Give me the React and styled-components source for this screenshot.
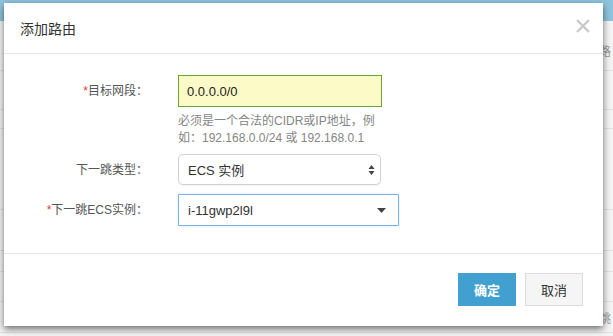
import React from "react";
import styled, { createGlobalStyle } from "styled-components";

const Global = createGlobalStyle`
  html, body { margin: 0; padding: 0; }
  body {
    font-family: "Liberation Sans", "Noto Sans CJK SC", sans-serif;
    background: #f4f4f4;
  }
`;

const Page = styled.div`
  position: relative;
  width: 613px;
  height: 336px;
  overflow: hidden;
  background: #f4f4f4;
`;

const TopBar = styled.div`
  height: 21px;
  background: #8ec4dd;
  display: flex;
  align-items: center;
  gap: 30px;
  padding-left: 210px;
  font-size: 12px;
  color: #d6ebf5;
`;

const Badge = styled.span`
  width: 22px;
  height: 10px;
  background: #f1c079;
`;

const Table = styled.div`
  display: flex;
  flex-direction: column;
  padding-top: 9px;
`;

const TableRow = styled.div`
  height: ${p => p.$h}px;
  border-bottom: 1px solid #e2e2e2;
  display: flex;
  align-items: center;
  justify-content: flex-end;
  padding-right: 2px;
  font-size: 12px;
  color: #9a9a9a;
`;

const Modal = styled.div`
  position: absolute;
  left: 4px;
  top: 3px;
  width: 599px;
  height: 323px;
  background: #fff;
  box-shadow: 0 3px 7px rgba(0, 0, 0, 0.55);
  display: flex;
  flex-direction: column;
`;

const Header = styled.div`
  height: 50px;
  border-bottom: 1px solid #e5e5e5;
  display: flex;
  align-items: center;
  justify-content: space-between;
  padding: 0 13px 0 16px;
`;

const Title = styled.h3`
  margin: 0;
  font-size: 14px;
  font-weight: normal;
  color: #333;
`;

const Close = styled.button`
  border: none;
  background: none;
  padding: 0;
  width: 14px;
  height: 14px;
  margin-top: -4px;
  cursor: pointer;
`;

const Body = styled.div`
  height: 200px;
  border-bottom: 1px solid #e5e5e5;
  padding-top: 21px;
  box-sizing: border-box;
  display: flex;
  flex-direction: column;
`;

const Row = styled.div`
  display: grid;
  grid-template-columns: 144px 1fr;
  column-gap: 30px;
  margin-bottom: ${p => p.$mb || 0}px;
`;

const Label = styled.label`
  text-align: right;
  font-size: 12px;
  color: #555;
  height: ${p => p.$h || 32}px;
  line-height: ${p => (p.$h || 32) + 1}px;
`;

const Star = styled.span`
  color: #e4393c;
`;

const Field = styled.div`
  display: flex;
  flex-direction: column;
`;

const Input = styled.input`
  width: 204px;
  height: 32px;
  box-sizing: border-box;
  border: 1px solid #6ba430;
  background: #fcfac6;
  padding: 0 8px;
  font-family: inherit;
  font-size: 13px;
  color: #222;
  outline: none;
`;

const Help = styled.div`
  width: 204px;
  margin-top: 6px;
  font-size: 12px;
  line-height: 17px;
  color: #858585;
`;

const Select = styled.div`
  width: ${p => p.$w}px;
  height: ${p => p.$h}px;
  box-sizing: border-box;
  border: 1px solid ${p => (p.$focus ? "#7ab3e8" : "#d2d2d2")};
  border-radius: ${p => (p.$focus ? 1 : 5)}px;
  box-shadow: ${p => (p.$focus ? "0 0 2px rgba(102,175,233,.4)" : "0 1px 1px rgba(0,0,0,.05)")};
  display: flex;
  align-items: center;
  justify-content: space-between;
  padding: 0 ${p => (p.$focus ? 12 : 5)}px 0 9px;
  font-size: 13px;
  color: #333;
  background: #fff;
`;

const Footer = styled.div`
  flex: 1;
  display: flex;
  justify-content: flex-end;
  align-items: flex-start;
  gap: 9px;
  padding: 19px 20px 0 0;
`;

const Button = styled.button`
  width: 58px;
  height: 33px;
  font-family: inherit;
  font-size: 13px;
  border: 1px solid ${p => (p.$primary ? "#42a0d0" : "#dcdcdc")};
  background: ${p => (p.$primary ? "#42a0d0" : "#f5f5f5")};
  color: ${p => (p.$primary ? "#fff" : "#333")};
  font-weight: ${p => (p.$primary ? "bold" : "normal")};
  cursor: pointer;
`;

const bgRows = [
  { h: 40, t: "路" }, { h: 38 }, { h: 18 }, { h: 80 }, { h: 40 }, { h: 20 }, { h: 29 }, { h: 30, t: "跳" },
];

export default function App() {
  return (
    <Page>
      <Global />
      <TopBar>
        <span>搜索</span>
        <span>帮助</span>
        <Badge />
        <span>Accountinfo</span>
        <span>退出</span>
      </TopBar>
      <Table>
        {bgRows.map((r, i) => (
          <TableRow key={i} $h={r.h}>{r.t}</TableRow>
        ))}
      </Table>

      <Modal>
        <Header>
          <Title>添加路由</Title>
          <Close aria-label="close">
            <svg width="14" height="14" viewBox="0 0 14 14">
              <path d="M1 1 L13 13 M13 1 L1 13" stroke="#c8c8c8" strokeWidth="2.2" />
            </svg>
          </Close>
        </Header>
        <Body>
          <Row $mb={7}>
            <Label><Star>*</Star>目标网段：</Label>
            <Field>
              <Input defaultValue="0.0.0.0/0" />
              <Help>必须是一个合法的CIDR或IP地址，例如：192.168.0.0/24 或 192.168.0.1</Help>
            </Field>
          </Row>
          <Row $mb={9}>
            <Label $h={31}>下一跳类型：</Label>
            <Select $w={203} $h={31}>
              <span>ECS 实例</span>
              <svg width="7" height="12" viewBox="0 0 7 12">
                <path d="M3.5 1 L6.5 5 L0.5 5 Z M3.5 11 L6.5 7 L0.5 7 Z" fill="#444" />
              </svg>
            </Select>
          </Row>
          <Row>
            <Label><Star>*</Star>下一跳ECS实例：</Label>
            <Select $w={221} $h={32} $focus>
              <span>i-11gwp2l9l</span>
              <svg width="9" height="5" viewBox="0 0 9 5">
                <path d="M0 0 L9 0 L4.5 5 Z" fill="#444" />
              </svg>
            </Select>
          </Row>
        </Body>
        <Footer>
          <Button $primary>确定</Button>
          <Button>取消</Button>
        </Footer>
      </Modal>
    </Page>
  );
}
